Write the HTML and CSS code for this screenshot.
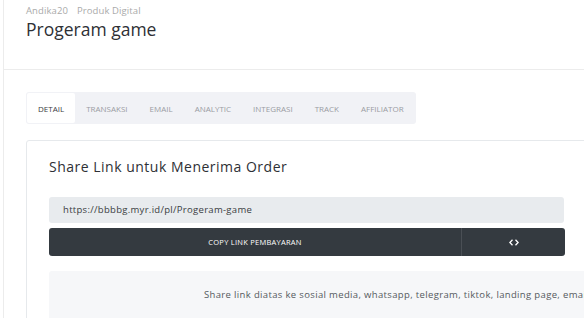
FILE: index.html
```html
<!DOCTYPE html>
<html lang="en">
<head>
    <meta charset="UTF-8">
    <meta name="viewport" content="width=device-width, initial-scale=1.0">
    <title>Progeram game</title>
    <link rel="stylesheet" href="styles.css">
</head>
<body>
    <div class="page">
        <header class="page-head">
            <div class="crumbs">
                <span>Andika20</span>
                <span>Produk Digital</span>
            </div>
            <h1>Progeram game</h1>
        </header>
        <main class="page-body">
            <nav class="tabs">
                <a class="tab active">Detail</a>
                <a class="tab">Transaksi</a>
                <a class="tab">Email</a>
                <a class="tab">Analytic</a>
                <a class="tab">Integrasi</a>
                <a class="tab">Track</a>
                <a class="tab">Affiliator</a>
            </nav>
            <section class="card">
                <h2>Share Link untuk Menerima Order</h2>
                <div class="link-box">https://bbbbg.myr.id/pl/Progeram-game</div>
                <div class="btn-bar">
                    <button class="btn-copy">COPY LINK PEMBAYARAN</button>
                    <button class="btn-embed">
                        <svg width="10" height="7" viewBox="0 0 10 7" fill="none" stroke="#fff" stroke-width="1.3">
                            <path d="M3.5 0.8 L0.9 3.5 L3.5 6.2"/>
                            <path d="M6.5 0.8 L9.1 3.5 L6.5 6.2"/>
                        </svg>
                    </button>
                </div>
                <div class="info">
                    Share link diatas ke sosial media, whatsapp, telegram, tiktok, landing page, email, dll.
                </div>
            </section>
        </main>
    </div>
</body>
</html>
```

FILE: styles.css
```css
html, body {
    margin: 0;
    overflow: hidden;
}
body {
    font-family: "Open Sans", Lato, sans-serif;
    background: #fff;
    color: #333;
    height: 318px;
}
.page {
    margin-left: 3px;
    border-left: 1px solid #ececec;
    height: 100%;
    width: 900px;
}
.page-head {
    height: 70px;
    padding: 4px 22px 0;
    border-bottom: 1px solid #ececec;
    box-sizing: border-box;
}
.crumbs {
    font-size: 9.5px;
    color: #aaa;
    display: flex;
    gap: 9px;
    line-height: 13px;
    letter-spacing: 0.1px;
}
.page-head h1 {
    margin: 0;
    font-size: 17.5px;
    font-weight: 400;
    line-height: 24px;
    color: #2e3035;
}
.page-body {
    padding: 22px 0 0 22px;
}
.tabs {
    display: inline-flex;
    background: #f1f2f6;
    border-radius: 3px;
    padding: 1px;
    height: 32px;
    box-sizing: border-box;
}
.tab {
    display: flex;
    align-items: center;
    padding: 0 11px;
    font-size: 8px;
    text-transform: uppercase;
    color: #9a9ca3;
    border-radius: 2px;
}
.tab.active {
    background: #fff;
    color: #3a3d42;
}
.card {
    margin-top: 16px;
    border: 1px solid #e6e9ec;
    border-radius: 3px;
    padding: 16px 22px 0;
    width: 800px;
    height: 200px;
}
.card h2 {
    margin: 0;
    font-size: 14px;
    letter-spacing: 0.5px;
    font-weight: 400;
    line-height: 20px;
    color: #2e3035;
}
.link-box {
    margin-top: 20px;
    width: 515px;
    height: 26px;
    box-sizing: border-box;
    background: #e8ebee;
    border-radius: 3px;
    padding: 0 14px;
    font-size: 9.5px;
    letter-spacing: 0.3px;
    line-height: 26px;
    color: #3a3d42;
}
.btn-bar {
    margin-top: 5px;
    width: 516px;
    height: 28px;
    display: flex;
    background: #343a40;
    border-radius: 3px;
}
.btn-bar button {
    background: none;
    border: none;
    color: #fff;
    font-family: inherit;
    font-size: 7.5px;
    letter-spacing: 0.25px;
    padding: 0;
    display: flex;
    align-items: center;
    justify-content: center;
}
.btn-copy {
    width: 413px;
    border-right: 1px solid #4a4f55 !important;
}
.btn-embed {
    flex: 1;
}
.info {
    margin-top: 15px;
    width: 715px;
    height: 60px;
    background: #f6f7f9;
    border-radius: 3px;
    font-size: 9.5px;
    letter-spacing: 0.35px;
    color: #555a60;
    text-align: center;
    padding-top: 17px;
    box-sizing: border-box;
    white-space: nowrap;
}
```
